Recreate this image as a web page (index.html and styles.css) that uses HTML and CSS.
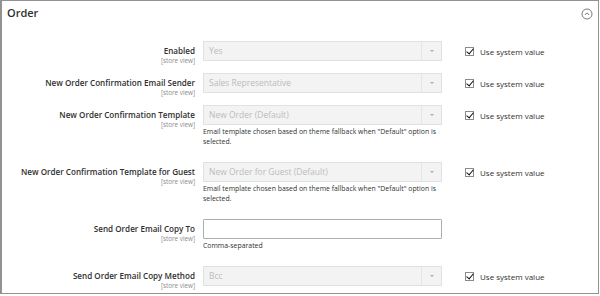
FILE: index.html
```html
<!DOCTYPE html>
<html>
    <head>
        <title>Order</title>
        <link rel="stylesheet" href="styles.css">
    </head>
    <body>
        <div class="section">
            <div class="section-head">
                <span class="section-title">Order</span>
                <svg class="collapse-icon" width="12" height="12" viewBox="0 0 12 12">
                    <circle cx="6" cy="6" r="5" fill="none" stroke="#7a7a7a" stroke-width="1"/>
                    <path d="M3.8 7 L6 4.8 L8.2 7" fill="none" stroke="#7a7a7a" stroke-width="1"/>
                </svg>
            </div>

            <div class="rows">
                <div class="row">
                    <div class="label">Enabled<span class="scope">[store view]</span></div>
                    <div class="control">
                        <div class="select">Yes<span class="arrow"></span></div>
                    </div>
                    <label class="use-default"><span class="check"></span>Use system value</label>
                </div>

                <div class="row">
                    <div class="label">New Order Confirmation Email Sender<span class="scope">[store view]</span></div>
                    <div class="control">
                        <div class="select">Sales Representative<span class="arrow"></span></div>
                    </div>
                    <label class="use-default"><span class="check"></span>Use system value</label>
                </div>

                <div class="row">
                    <div class="label">New Order Confirmation Template<span class="scope">[store view]</span></div>
                    <div class="control">
                        <div class="select">New Order (Default)<span class="arrow"></span></div>
                        <p class="note">Email template chosen based on theme fallback when "Default" option is selected.</p>
                    </div>
                    <label class="use-default"><span class="check"></span>Use system value</label>
                </div>

                <div class="row">
                    <div class="label">New Order Confirmation Template for Guest<span class="scope">[store view]</span></div>
                    <div class="control">
                        <div class="select">New Order for Guest (Default)<span class="arrow"></span></div>
                        <p class="note">Email template chosen based on theme fallback when "Default" option is selected.</p>
                    </div>
                    <label class="use-default"><span class="check"></span>Use system value</label>
                </div>

                <div class="row">
                    <div class="label">Send Order Email Copy To<span class="scope">[store view]</span></div>
                    <div class="control">
                        <input class="text-input" type="text">
                        <p class="note">Comma-separated</p>
                    </div>
                </div>

                <div class="row">
                    <div class="label">Send Order Email Copy Method<span class="scope">[store view]</span></div>
                    <div class="control">
                        <div class="select">Bcc<span class="arrow"></span></div>
                    </div>
                    <label class="use-default"><span class="check"></span>Use system value</label>
                </div>
            </div>
        </div>
    </body>
</html>
```

FILE: styles.css
```css
body{
    margin: 0;
    background-color: white;
    font-family: "Open Sans", Arial, sans-serif;
    color: #303030;
}
.section{
    box-sizing: border-box;
    width: 599px;
    height: 294px;
    border: 1px solid #929292;
    border-left-width: 2px;
    overflow: hidden;
}
.section-head{
    height: 29px;
    display: flex;
    justify-content: space-between;
    padding: 0 7px 0 5px;
}
.section-title{
    font-size: 11px;
    font-weight: 600;
    line-height: 12px;
    margin-top: 6px;
}
.collapse-icon{
    margin-top: 7px;
    margin-right: -2px;
}
.rows{
    padding-top: 11px;
}
.row{
    display: flex;
    align-items: flex-start;
    margin-bottom: 12px;
}
.label{
    width: 193px;
    height: 20px;
    text-align: right;
    font-size: 8.1px;
    font-weight: 600;
    line-height: 12px;
    padding-top: 4px;
    box-sizing: border-box;
}
.scope{
    display: block;
    font-size: 6.3px;
    font-weight: 400;
    line-height: 8px;
    color: #8a8a8a;
}
.control{
    width: 239px;
    margin-left: 8px;
}
.select{
    position: relative;
    box-sizing: border-box;
    height: 20px;
    padding-left: 5px;
    background-color: #f3f3f3;
    border: 1px solid #e1e1e1;
    font-size: 8.5px;
    line-height: 18px;
    color: #bcbcbc;
}
.arrow{
    position: absolute;
    top: 0;
    right: 0;
    width: 19px;
    height: 18px;
    border-left: 1px solid #e6e6e6;
}
.arrow::after{
    content: "";
    position: absolute;
    left: 8px;
    top: 8px;
    border-left: 2px solid transparent;
    border-right: 2px solid transparent;
    border-top: 2.5px solid #a9a9a9;
}
.text-input{
    display: block;
    box-sizing: border-box;
    width: 239px;
    height: 20px;
    margin: 0;
    border: 1px solid #adadad;
    border-radius: 1px;
    background-color: white;
}
.note{
    margin: 2px 0 3px 0;
    font-size: 6.9px;
    line-height: 10px;
    color: #303030;
}
.use-default{
    display: flex;
    align-items: center;
    margin-left: 23px;
    height: 20px;
    font-size: 8px;
    color: #303030;
}
.check{
    position: relative;
    box-sizing: border-box;
    width: 9px;
    height: 9px;
    margin-right: 6px;
    border: 1px solid #8a8a8a;
    background-color: white;
}
.check::after{
    content: "";
    position: absolute;
    left: 2px;
    top: -1px;
    width: 3px;
    height: 6px;
    border-right: 1.6px solid #111;
    border-bottom: 1.6px solid #111;
    transform: rotate(40deg);
}
```
